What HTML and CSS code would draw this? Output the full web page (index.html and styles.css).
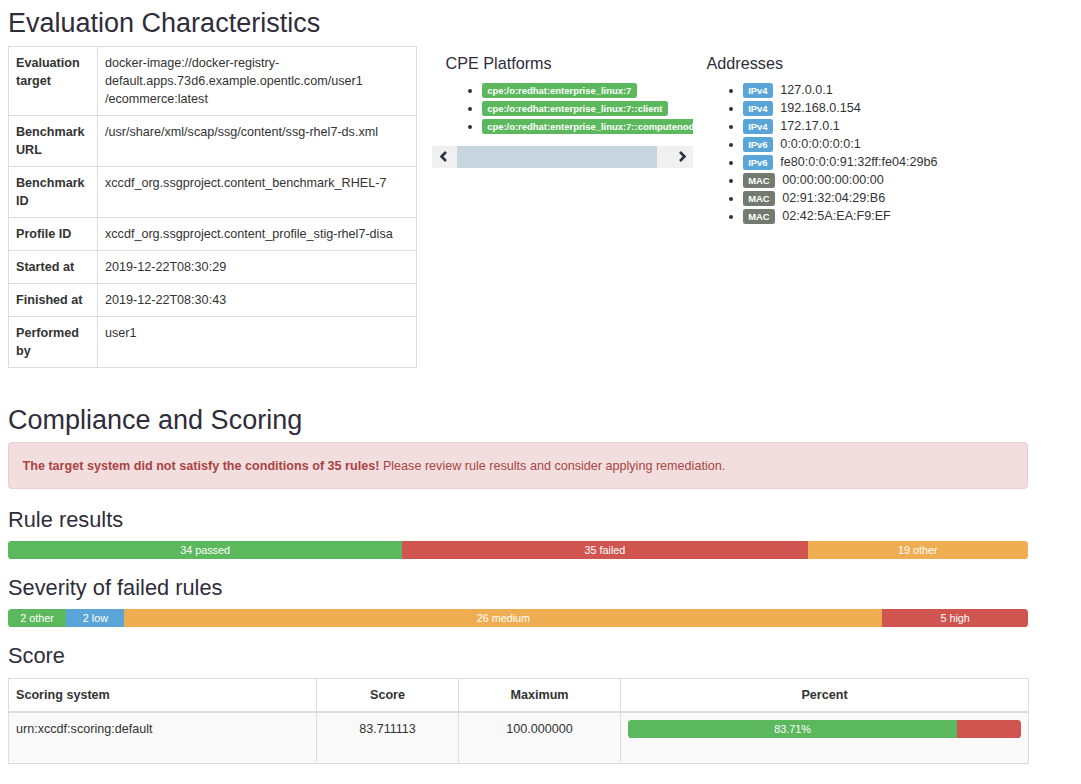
FILE: index.html
```html
<!DOCTYPE html>
<html lang="en">
<head>
<meta charset="utf-8">
<title>Evaluation Characteristics</title>
<link rel="stylesheet" href="styles.css">
</head>
<body>
<div class="page">
  <section class="characteristics">
    <h2 class="title">Evaluation Characteristics</h2>
    <div class="top-row">
      <div class="col-info">
        <table class="info-table">
          <colgroup><col class="c1"><col class="c2"></colgroup>
          <tbody>
            <tr><th>Evaluation target</th><td>docker-image://docker-registry-<br>default.apps.73d6.example.opentlc.com/user1<br>/ecommerce:latest</td></tr>
            <tr><th>Benchmark URL</th><td>/usr/share/xml/scap/ssg/content/ssg-rhel7-ds.xml</td></tr>
            <tr><th>Benchmark ID</th><td>xccdf_org.ssgproject.content_benchmark_RHEL-7</td></tr>
            <tr><th>Profile ID</th><td>xccdf_org.ssgproject.content_profile_stig-rhel7-disa</td></tr>
            <tr><th>Started at</th><td>2019-12-22T08:30:29</td></tr>
            <tr><th>Finished at</th><td>2019-12-22T08:30:43</td></tr>
            <tr><th>Performed by</th><td>user1</td></tr>
          </tbody>
        </table>
      </div>
      <div class="col-cpe">
        <div class="cpe-inner">
          <h4>CPE Platforms</h4>
          <ul class="cpe-list">
            <li><span class="label label-success">cpe:/o:redhat:enterprise_linux:7</span></li>
            <li><span class="label label-success">cpe:/o:redhat:enterprise_linux:7::client</span></li>
            <li><span class="label label-success">cpe:/o:redhat:enterprise_linux:7::computenode</span></li>
          </ul>
        </div>
        <div class="fake-scroll">
          <div class="sb-btn"><svg width="9" height="11" viewBox="0 0 9 11"><polyline points="7,1 2.5,5.5 7,10" fill="none" stroke="#2f2f45" stroke-width="2.6"/></svg></div>
          <div class="sb-thumb"></div>
          <div class="sb-space"></div>
          <div class="sb-btn"><svg width="9" height="11" viewBox="0 0 9 11"><polyline points="2,1 6.5,5.5 2,10" fill="none" stroke="#2f2f45" stroke-width="2.6"/></svg></div>
        </div>
      </div>
      <div class="col-addr">
        <h4>Addresses</h4>
        <ul class="addr-list">
          <li><span class="label label-info">IPv4</span>127.0.0.1</li>
          <li><span class="label label-info">IPv4</span>192.168.0.154</li>
          <li><span class="label label-info">IPv4</span>172.17.0.1</li>
          <li><span class="label label-info">IPv6</span>0:0:0:0:0:0:0:1</li>
          <li><span class="label label-info">IPv6</span>fe80:0:0:0:91:32ff:fe04:29b6</li>
          <li><span class="label label-default">MAC</span>00:00:00:00:00:00</li>
          <li><span class="label label-default">MAC</span>02:91:32:04:29:B6</li>
          <li><span class="label label-default">MAC</span>02:42:5A:EA:F9:EF</li>
        </ul>
      </div>
    </div>
  </section>

  <section class="compliance">
    <h2>Compliance and Scoring</h2>
    <div class="alert"><strong>The target system did not satisfy the conditions of 35 rules!</strong> Please review rule results and consider applying remediation.</div>

    <h3>Rule results</h3>
    <div class="progress">
      <div class="bar bar-success" style="width:38.64%">34 passed</div>
      <div class="bar bar-danger" style="width:39.77%">35 failed</div>
      <div class="bar bar-warning" style="width:21.59%">19 other</div>
    </div>

    <h3>Severity of failed rules</h3>
    <div class="progress">
      <div class="bar bar-success" style="width:5.71%">2 other</div>
      <div class="bar bar-info" style="width:5.71%">2 low</div>
      <div class="bar bar-warning" style="width:74.29%">26 medium</div>
      <div class="bar bar-danger" style="width:14.29%">5 high</div>
    </div>

    <h3 class="score-title">Score</h3>
    <table class="score-table">
      <colgroup><col class="s1"><col class="s2"><col class="s3"><col class="s4"></colgroup>
      <thead>
        <tr><th>Scoring system</th><th class="center">Score</th><th class="center">Maximum</th><th class="center">Percent</th></tr>
      </thead>
      <tbody>
        <tr>
          <td>urn:xccdf:scoring:default</td>
          <td class="center">83.711113</td>
          <td class="center">100.000000</td>
          <td>
            <div class="progress in-cell">
              <div class="bar bar-success" style="width:83.71%">83.71%</div>
              <div class="bar bar-danger" style="width:16.29%"></div>
            </div>
          </td>
        </tr>
      </tbody>
    </table>
  </section>
</div>
</body>
</html>
```
FILE: styles.css
```css
html, body {
  margin: 0;
  padding: 0;
  background: #ffffff;
}

body {
  font-family: "Liberation Sans", Arial, Helvetica, sans-serif;
  font-size: 12.6px;
  line-height: 18px;
  color: #333333;
}

.page {
  width: 1020px;
  margin-left: 8px;
}

h2 {
  font-size: 27px;
  font-weight: normal;
  line-height: 1.1;
  margin: 18px 0 7px;
  padding-top: 2px;
  color: #2f2d3a;
}

h2.title {
  margin-top: 7px;
}

h3 {
  font-size: 21.8px;
  font-weight: normal;
  line-height: 1.1;
  margin: 17px 0 9px;
  color: #2f2d3a;
}

h3.score-title {
  margin-bottom: 10px;
}

h4 {
  font-size: 16.2px;
  font-weight: normal;
  line-height: 1.1;
  margin: 9px 0 8px;
  color: #2f2d3a;
}

/* ---------- top row ---------- */
.top-row {
  display: flex;
  align-items: flex-start;
}

.col-info {
  flex: none;
  width: 424px;
}

.info-table {
  width: 409px;
  border-collapse: collapse;
  table-layout: fixed;
  margin-bottom: 18px;
}

.info-table col.c1 {
  width: 89px;
}

.info-table th,
.info-table td {
  border: 1px solid #dddddd;
  padding: 7px;
  text-align: left;
  vertical-align: top;
}

.info-table th {
  font-weight: bold;
}

.col-cpe {
  flex: none;
  width: 261px;
  overflow: hidden;
}

.cpe-inner {
  padding: 0 13.5px;
}

.cpe-list,
.addr-list {
  margin: 0 0 11px;
  padding-left: 36px;
}

.cpe-list li,
.addr-list li {
  white-space: nowrap;
}

.label {
  display: inline;
  padding: 0.2em 0.6em 0.3em;
  font-size: 75%;
  font-weight: bold;
  line-height: 1;
  color: #ffffff;
  text-align: center;
  white-space: nowrap;
  vertical-align: baseline;
  border-radius: 0.25em;
}

.addr-list .label {
  margin-right: 7px;
}

.label-success { background: #5cb85c; }
.label-info { background: #5aa5d7; }
.label-default { background: #737b70; }

.fake-scroll {
  display: flex;
  align-items: center;
  height: 22px;
  background: #f0f0f0;
}

.sb-btn {
  flex: none;
  width: 22px;
  height: 22px;
  display: flex;
  align-items: center;
  justify-content: center;
}

.sb-thumb {
  flex: none;
  width: 200px;
  height: 22px;
  margin-left: 3px;
  background: #c6d5de;
}

.sb-space {
  flex: 1;
}

.col-addr {
  flex: 1;
  padding: 0 13.5px;
}

/* ---------- compliance ---------- */
.alert {
  padding: 13.5px;
  margin-bottom: 19px;
  border: 1px solid #ebccd1;
  border-radius: 3.6px;
  background: #f2dede;
  color: #a94442;
}

.progress {
  display: flex;
  height: 18px;
  overflow: hidden;
  border-radius: 3.6px;
  background: #f5f5f5;
}

.bar {
  height: 18px;
  font-size: 10.8px;
  line-height: 18px;
  color: #ffffff;
  text-align: center;
  white-space: nowrap;
  overflow: hidden;
}

.bar-success { background: #5cb85c; }
.bar-danger { background: #d05550; }
.bar-warning { background: #efad52; }
.bar-info { background: #5aa5d7; }

/* ---------- score table ---------- */
.score-table {
  width: 1020px;
  border-collapse: collapse;
  table-layout: fixed;
  margin-bottom: 18px;
}

.score-table col.s1 { width: 308px; }
.score-table col.s2 { width: 142px; }
.score-table col.s3 { width: 162px; }
.score-table col.s4 { width: 408px; }

.score-table th,
.score-table td {
  border: 1px solid #dddddd;
  padding: 7px;
  text-align: left;
  vertical-align: top;
}

.score-table thead th {
  border-bottom: 2px solid #dddddd;
  vertical-align: bottom;
}

.score-table tbody td {
  background: #f9f9f9;
}

.score-table .center {
  text-align: center;
}

.progress.in-cell {
  margin-bottom: 18px;
}
```
